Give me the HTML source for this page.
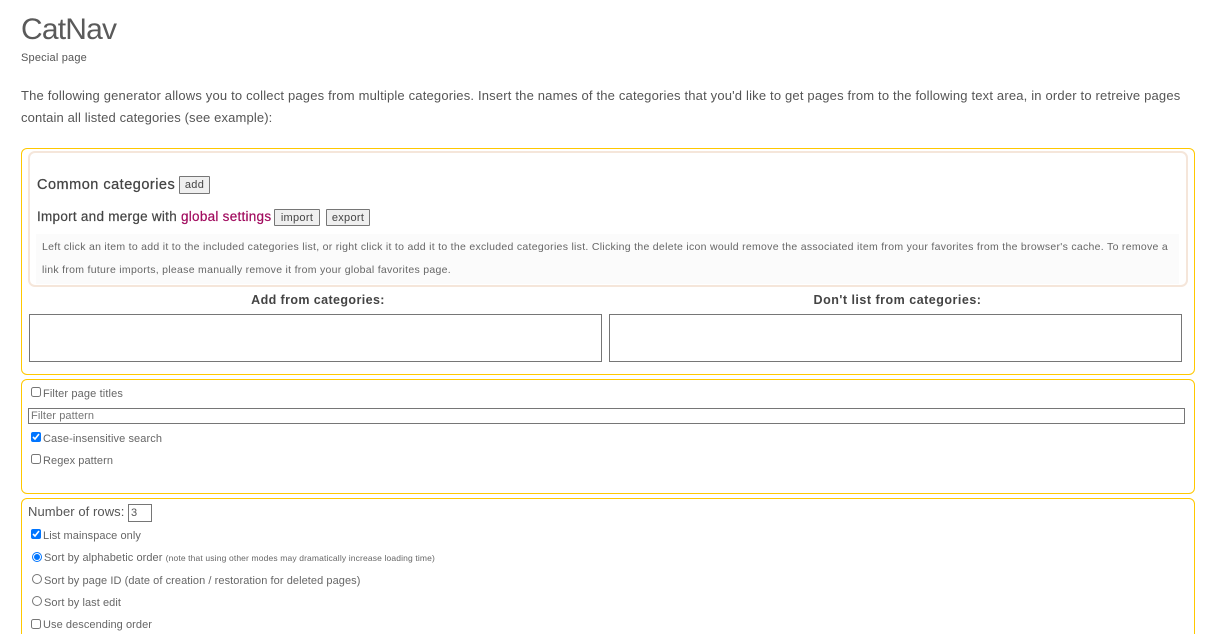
<!DOCTYPE html>
<html lang="en">
<head>
<meta charset="utf-8">
<title>CatNav</title>
<style>
html,body{margin:0;padding:0;background:#fff;width:1210px;height:634px;overflow:hidden}
body{position:relative;font-family:"Liberation Sans",sans-serif;color:#555}
.t{position:absolute;white-space:nowrap;line-height:16px;height:16px}
.box{position:absolute;box-sizing:border-box;border:1px solid #ffc800;border-radius:6px}
input[type=checkbox],input[type=radio]{position:absolute;margin:0;width:10px;height:10px}
.btn{position:absolute;box-sizing:border-box;background:#efefef;border:1px solid #767676;border-radius:1px;color:#444;font:11px "Liberation Sans",sans-serif;letter-spacing:.3px;padding:0;text-align:center}
.area{position:absolute;box-sizing:border-box;border:1px solid #767676;background:#fff;margin:0;padding:0;resize:none}
.lbl{font-size:11px;letter-spacing:.07px;color:#666}
h1{margin:0;font-weight:400}
a{color:#a10b5e;text-decoration:none}
input[type=text]{position:absolute;box-sizing:border-box;border:1px solid #767676;margin:0;padding:0 2px;font:11px "Liberation Sans",sans-serif;letter-spacing:.1px;color:#555;background:#fff;border-radius:0;outline:0}
input::placeholder{color:#757575;opacity:1}
</style>
</head>
<body>
<h1 class="t" style="left:21px;top:13px;height:34px;line-height:34px;font-size:30px;letter-spacing:-.8px;color:#5a5a5a">CatNav</h1>
<div class="t" style="left:21px;top:50px;font-size:11px;letter-spacing:.2px;color:#555">Special page</div>
<div class="t" style="left:21px;top:88px;font-size:13px;letter-spacing:.18px">The following generator allows you to collect pages from multiple categories. Insert the names of the categories that you'd like to get pages from to the following text area, in order to retreive pages</div>
<div class="t" style="left:21px;top:110px;font-size:13px;letter-spacing:.13px">contain all listed categories (see example):</div>

<div class="box" style="left:21px;top:148px;width:1174px;height:227px"></div>
<div style="position:absolute;box-sizing:border-box;left:28px;top:151px;width:1160px;height:136px;border:2px solid #f5e6da;border-radius:7px"></div>
<div style="position:absolute;left:36px;top:234px;width:1143px;height:50px;background:#fbfbfb"></div>

<div class="t" style="left:37px;top:177px;font-size:14.5px;letter-spacing:.5px;color:#444;-webkit-text-stroke:.25px #444">Common categories</div>
<button class="btn" style="left:179px;top:176px;width:31px;height:18px">add</button>
<div class="t" style="left:37px;top:209px;font-size:13.5px;letter-spacing:.27px;color:#444;-webkit-text-stroke:.2px #444">Import and merge with <a href="#" style="-webkit-text-stroke:.2px #a10b5e">global settings</a></div>
<button class="btn" style="left:274px;top:209px;width:46px;height:17px">import</button>
<button class="btn" style="left:326px;top:209px;width:44px;height:17px">export</button>

<div class="t" style="left:42px;top:239px;font-size:10.5px;letter-spacing:.29px;color:#666">Left click an item to add it to the included categories list, or right click it to add it to the excluded categories list. Clicking the delete icon would remove the associated item from your favorites from the browser's cache. To remove a</div>
<div class="t" style="left:42px;top:262px;font-size:10.5px;letter-spacing:.29px;color:#666">link from future imports, please manually remove it from your global favorites page.</div>

<div class="t" style="left:29px;top:292px;width:578px;text-align:center;font-size:12.5px;font-weight:700;letter-spacing:.4px;color:#444">Add from categories:</div>
<div class="t" style="left:609px;top:292px;width:577px;text-align:center;font-size:12.5px;font-weight:700;letter-spacing:.5px;color:#444">Don't list from categories:</div>
<textarea class="area" style="left:29px;top:314px;width:573px;height:48px"></textarea>
<textarea class="area" style="left:609px;top:314px;width:573px;height:48px"></textarea>

<div class="box" style="left:21px;top:379px;width:1174px;height:115px"></div>
<input type="checkbox" style="left:31px;top:387px">
<div class="t lbl" style="left:43px;top:386px;letter-spacing:.13px">Filter page titles</div>
<input type="text" placeholder="Filter pattern" style="left:28px;top:408px;width:1157px;height:16px">
<input type="checkbox" checked style="left:31px;top:432px">
<div class="t lbl" style="left:43px;top:431px;letter-spacing:.1px">Case-insensitive search</div>
<input type="checkbox" style="left:31px;top:454px">
<div class="t lbl" style="left:43px;top:453px">Regex pattern</div>

<div class="box" style="left:21px;top:498px;width:1174px;height:160px"></div>
<div class="t" style="left:28px;top:504px;font-size:13px;letter-spacing:.07px">Number of rows:</div>
<input type="text" value="3" style="left:128px;top:504px;width:24px;height:18px">
<input type="checkbox" checked style="left:31px;top:529px">
<div class="t lbl" style="left:43px;top:528px">List mainspace only</div>
<input type="radio" name="s" checked style="left:32px;top:552px">
<div class="t lbl" style="left:44px;top:550px">Sort by alphabetic order <span style="font-size:8.5px;letter-spacing:.14px;margin-left:0">(note that using other modes may dramatically increase loading time)</span></div>
<input type="radio" name="s" style="left:32px;top:574px">
<div class="t lbl" style="left:44px;top:573px">Sort by page ID (date of creation / restoration for deleted pages)</div>
<input type="radio" name="s" style="left:32px;top:596px">
<div class="t lbl" style="left:44px;top:595px">Sort by last edit</div>
<input type="checkbox" style="left:31px;top:619px">
<div class="t lbl" style="left:43px;top:617px">Use descending order</div>
</body>
</html>
